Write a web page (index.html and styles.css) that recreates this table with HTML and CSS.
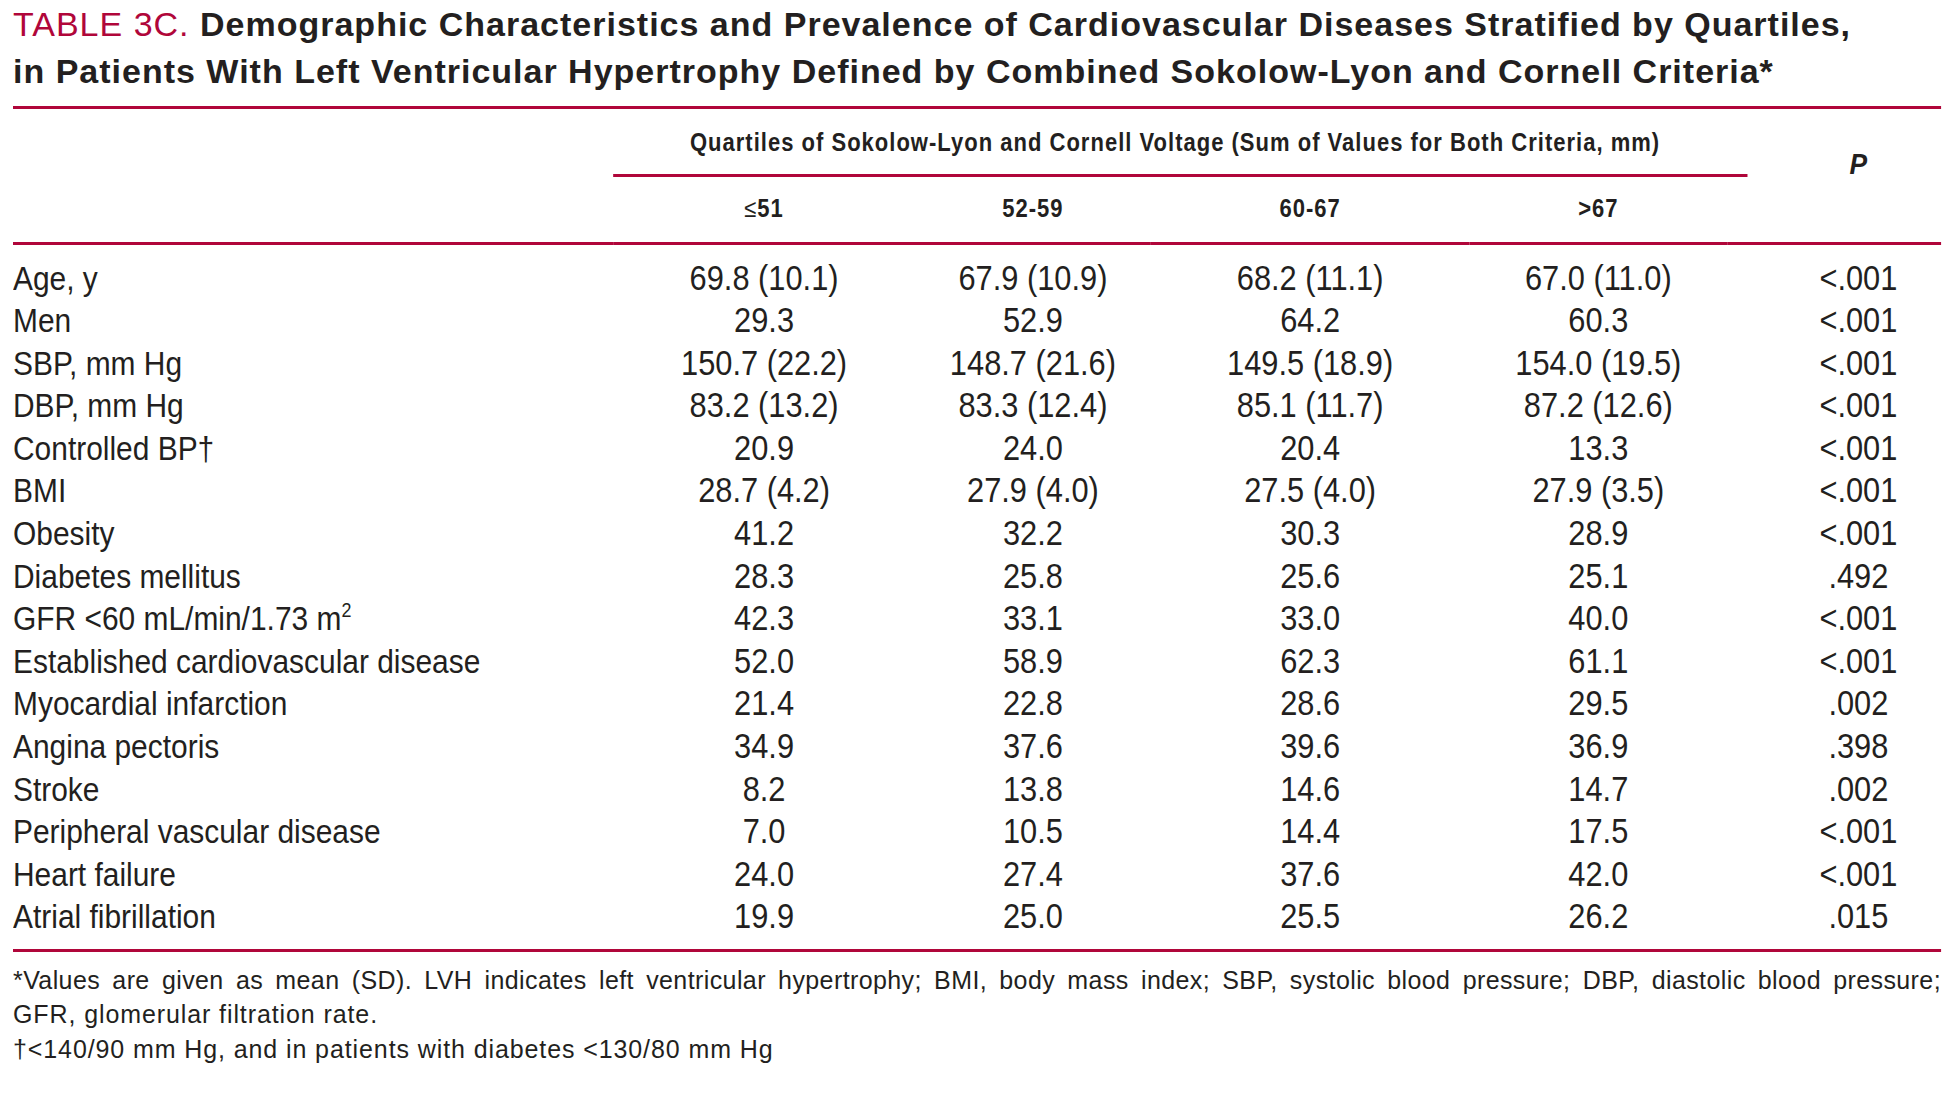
FILE: index.html
```html
<!DOCTYPE html>
<html lang="en">
<head>
<meta charset="utf-8">
<title>Table 3C</title>
<link rel="stylesheet" href="styles.css">
</head>
<body>
<div class="page">
  <h1 class="title"><span class="label">TABLE 3C.</span> Demographic Characteristics and Prevalence of Cardiovascular Diseases Stratified by Quartiles,<br>in Patients With Left Ventricular Hypertrophy Defined by Combined Sokolow-Lyon and Cornell Criteria*</h1>
  <div class="sheet">
  <table class="data">
    <colgroup>
      <col class="c-label">
      <col class="c-q1">
      <col class="c-q2">
      <col class="c-q3">
      <col class="c-q4">
      <col class="c-p">
    </colgroup>
    <thead>
      <tr>
        <th class="blank" rowspan="2"></th>
        <th class="span" colspan="4"><div class="span-inner">Quartiles of Sokolow-Lyon and Cornell Voltage (Sum of Values for Both Criteria, mm)</div></th>
        <th class="p-head" rowspan="2"><i>P</i></th>
      </tr>
      <tr>
        <th class="q"><span class="le">≤</span>51</th>
        <th class="q">52-59</th>
        <th class="q">60-67</th>
        <th class="q">&gt;67</th>
      </tr>
    </thead>
    <tbody>
      <tr><td>Age, y</td><td>69.8 (10.1)</td><td>67.9 (10.9)</td><td>68.2 (11.1)</td><td>67.0 (11.0)</td><td>&lt;.001</td></tr>
      <tr><td>Men</td><td>29.3</td><td>52.9</td><td>64.2</td><td>60.3</td><td>&lt;.001</td></tr>
      <tr><td>SBP, mm Hg</td><td>150.7 (22.2)</td><td>148.7 (21.6)</td><td>149.5 (18.9)</td><td>154.0 (19.5)</td><td>&lt;.001</td></tr>
      <tr><td>DBP, mm Hg</td><td>83.2 (13.2)</td><td>83.3 (12.4)</td><td>85.1 (11.7)</td><td>87.2 (12.6)</td><td>&lt;.001</td></tr>
      <tr><td>Controlled BP†</td><td>20.9</td><td>24.0</td><td>20.4</td><td>13.3</td><td>&lt;.001</td></tr>
      <tr><td>BMI</td><td>28.7 (4.2)</td><td>27.9 (4.0)</td><td>27.5 (4.0)</td><td>27.9 (3.5)</td><td>&lt;.001</td></tr>
      <tr><td>Obesity</td><td>41.2</td><td>32.2</td><td>30.3</td><td>28.9</td><td>&lt;.001</td></tr>
      <tr><td>Diabetes mellitus</td><td>28.3</td><td>25.8</td><td>25.6</td><td>25.1</td><td>.492</td></tr>
      <tr><td>GFR &lt;60 mL/min/1.73 m<sup>2</sup></td><td>42.3</td><td>33.1</td><td>33.0</td><td>40.0</td><td>&lt;.001</td></tr>
      <tr><td>Established cardiovascular disease</td><td>52.0</td><td>58.9</td><td>62.3</td><td>61.1</td><td>&lt;.001</td></tr>
      <tr><td>Myocardial infarction</td><td>21.4</td><td>22.8</td><td>28.6</td><td>29.5</td><td>.002</td></tr>
      <tr><td>Angina pectoris</td><td>34.9</td><td>37.6</td><td>39.6</td><td>36.9</td><td>.398</td></tr>
      <tr><td>Stroke</td><td>8.2</td><td>13.8</td><td>14.6</td><td>14.7</td><td>.002</td></tr>
      <tr><td>Peripheral vascular disease</td><td>7.0</td><td>10.5</td><td>14.4</td><td>17.5</td><td>&lt;.001</td></tr>
      <tr><td>Heart failure</td><td>24.0</td><td>27.4</td><td>37.6</td><td>42.0</td><td>&lt;.001</td></tr>
      <tr><td>Atrial fibrillation</td><td>19.9</td><td>25.0</td><td>25.5</td><td>26.2</td><td>.015</td></tr>
    </tbody>
  </table>
  </div>
  <div class="notes">
    <span class="note-line justified">*Values are given as mean (SD). LVH indicates left ventricular hypertrophy; BMI, body mass index; SBP, systolic blood pressure; DBP, diastolic blood pressure;</span>
    <span class="note-line">GFR, glomerular filtration rate.</span>
    <span class="note-line">†&lt;140/90 mm Hg, and in patients with diabetes &lt;130/80 mm Hg</span>
  </div>
</div>
</body>
</html>
```
FILE: styles.css
```css
html, body {
  margin: 0;
  padding: 0;
  background: #ffffff;
}

.page {
  padding: 1px 9px 0 13px;
  color: #231f20;
  font-family: "Liberation Sans", Arial, sans-serif;
  overflow: hidden;
}

.title {
  margin: 0;
  font-weight: 700;
  font-size: 34px;
  line-height: 47px;
  letter-spacing: 1px;
  color: #231f20;
  white-space: nowrap;
}

.title .label {
  font-weight: 400;
  color: #b0063a;
}

/* condensed typesetting: the whole table is drawn narrow */
.sheet {
  margin-top: 11px;
  width: 2191px;
  transform: scaleX(0.88);
  transform-origin: 0 0;
}

.data {
  width: 2191px;
  table-layout: fixed;
  border-collapse: separate;
  border-spacing: 0;
  border-top: 3px solid #b0063a;
  border-bottom: 3px solid #b0063a;
}

.c-label { width: 682px; }
.c-q1 { width: 343px; }
.c-q2 { width: 268px; }
.c-q3 { width: 362px; }
.c-q4 { width: 293px; }
.c-p { width: 243px; }

.data th {
  padding: 0;
  font-weight: 700;
  font-size: 25px;
  line-height: 30px;
  letter-spacing: 1.15px;
  text-align: center;
  vertical-align: top;
}

.data th.blank,
.data th.q,
.data th.p-head {
  border-bottom: 3px solid #b0063a;
}

.data th.span {
  padding-top: 18px;
}

.span-inner {
  padding-bottom: 17px;
  padding-left: 11px;
  margin-right: -23px;
  padding-right: 23px;
  border-bottom: 3px solid #b0063a;
}

.data th.q {
  padding: 16px 0 19px;
}

.data th .le {
  font-weight: 400;
}

.data th.p-head {
  padding-top: 40px;
  padding-left: 55px;
  font-size: 30px;
  line-height: 30px;
  letter-spacing: 0;
}

.data td {
  padding: 0;
  font-size: 35px;
  line-height: 42.6px;
  text-align: center;
  white-space: nowrap;
}

.data td:first-child {
  text-align: left;
  font-size: 34px;
}

.data td:last-child {
  padding-left: 55px;
}

.data tbody tr:first-child td {
  padding-top: 11.5px;
}

.data tbody tr:last-child td {
  padding-bottom: 10.5px;
}

sup {
  font-size: 0.6em;
  line-height: 0;
  vertical-align: 0.65em;
}

.notes {
  margin-top: 11px;
  width: 1928px;
  font-size: 25px;
  line-height: 34.7px;
  letter-spacing: 0.9px;
}

.note-line {
  display: block;
}

.note-line.justified {
  letter-spacing: 0.4px;
  text-align: justify;
  text-align-last: justify;
}
```
